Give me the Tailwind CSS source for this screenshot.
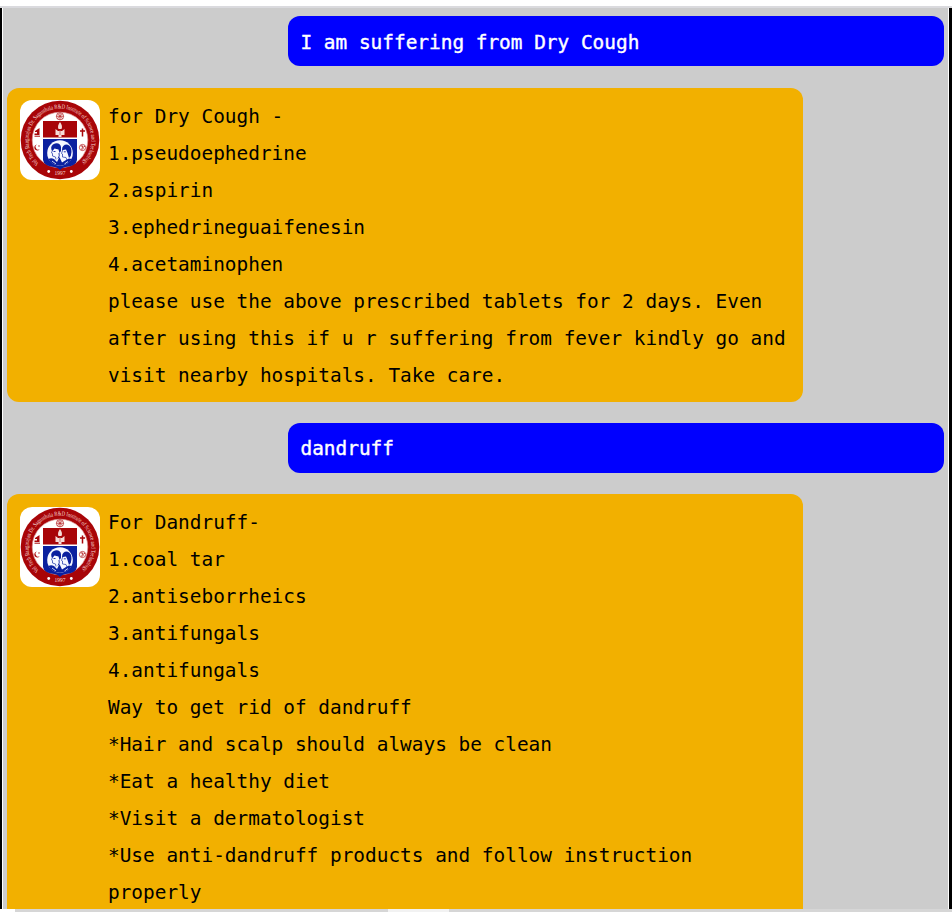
<!DOCTYPE html>
<html lang="en">
<head>
<meta charset="utf-8">
<title>Chat</title>
<script src="https://cdn.jsdelivr.net/npm/@tailwindcss/browser@4"></script>
</head>
<body class="h-[912px] w-[952px] overflow-hidden bg-white font-['DejaVu_Sans_Mono',monospace] text-[19.41px] leading-[37px] text-black">
<svg class="hidden">
  <defs>
    <path id="ring" d="M19 63.500A31.500 31.500 0 1 1 61 63.500"/>
    <symbol id="crest" viewBox="0 0 80 80">
      <rect width="80" height="80" fill="#fff"/>
      <circle cx="40" cy="40" r="39.3" fill="#a80508"/>
      <circle cx="40" cy="40" r="27.8" fill="#fff" stroke="#d99" stroke-width=".7"/>
      <text font-family="Liberation Serif, serif" font-size="6.2" fill="#f6dcd8"><textPath href="#ring" textLength="150" lengthAdjust="spacingAndGlyphs">Vel Tech Rangarajan Dr. Sagunthala R&amp;D Institute of Science and Technology</textPath></text>
      <text x="40" y="75.2" text-anchor="middle" font-family="Liberation Serif, serif" font-size="5.5" fill="#f4d5d0">1997</text>
      <circle cx="28.7" cy="71.5" r="1.4" fill="#fff"/><circle cx="51.3" cy="71.5" r="1.4" fill="#fff"/>
      <path d="M23 21H57V37.500H23Z" fill="#a80508"/>
      <path d="M23 39H57V60Q56 66 46 67Q42 67.500 40 70Q38 67.500 34 67Q24 66 23 60Z" fill="#0b209f"/>
      <g fill="none" stroke="#b92b2d" stroke-width=".8"><circle cx="40" cy="16.300" r="3.600"/><path d="M36.400 16.300H43.600M40 12.700V19.900M37.500 13.800L42.500 18.800M42.500 13.800L37.500 18.800"/></g>
      <path d="M40 22Q43 26 41.500 29H38.500Q37 26 40 22ZM35.500 29L38 31H42L44.500 29V35H41.500V37H38.500V35H35.500Z" fill="#f6dcd8"/>
      <path d="M40 30V35" stroke="#c45a5a" stroke-width=".8"/>
      <path d="M15 31L19.500 28V35H14.500V33.500H17V32H15Z" fill="#a80508"/>
      <path d="M14.500 36.200H20" stroke="#a80508"/>
      <path d="M62.500 28.500V36.500M60 31H65" stroke="#a80508" stroke-width="1.5"/>
      <path d="M17 44.500A3 3 0 1 0 19.700 49.300A2.700 2.700 0 0 1 17 44.500Z" fill="#a80508"/>
      <circle cx="19" cy="46" r=".7" fill="#a80508"/>
      <circle cx="62.500" cy="47.500" r="3.100" fill="none" stroke="#b92b2d" stroke-width=".8"/>
      <path d="M60.700 46Q63.500 45 62.300 47.300Q64.500 49.500 61 49M63 47.500L65 46" fill="none" stroke="#a80508" stroke-width=".8"/>
      <circle cx="40" cy="53" r="12.800" fill="#f7f8ff"/>
      <path d="M31.500 50Q30 45 35 43.500Q40 42.500 41 47V51L39.500 53L38.500 49.500L34.500 48.500L32.500 51Z" fill="#0b209f"/>
      <path d="M42 50Q42 44.500 47 44.500Q52 46 51.500 52Q51.500 56 49 58L47.500 53L46 49.500L43 50Z" fill="#0b209f"/>
      <path d="M32.500 50L31.500 53L32.500 53.500V56L35.500 57L36 59.500M42.700 50L41.500 53.500L42.500 54V57L46 57.500L47 60" fill="none" stroke="#3046ad" stroke-width=".8"/>
      <path d="M33.500 51.500H35.500M43.800 51.800H45.800M39 53Q40 56 38 58.500" fill="none" stroke="#0b209f" stroke-width=".9"/>
      <path d="M28.500 59Q31 57.500 34 59L37 62L39.500 57L42 62.500L46 60L49 58.500L51.500 59Q48 65.800 40 65.800Q32 65.800 28.500 59Z" fill="#0b209f"/>
      <path d="M32 61L36 64M44.500 64L48 61.500" stroke="#dce2ff" stroke-width=".9"/>
    </symbol>
  </defs>
</svg>
<div class="flex h-full flex-col">
  <header class="h-2 shrink-0 border-b-2 border-[#dadade] bg-white"></header>
  <main class="flex h-[901px] shrink-0 border-r-[3px] border-l-2 border-black">
    <div class="flex w-full flex-col overflow-hidden border-x border-white bg-[#ccc] px-1 pt-2">
      <div class="mb-[22px] h-[50px] w-[656px] shrink-0 self-end rounded-[12px] bg-[blue] px-[12.5px] pt-2 text-white [-webkit-text-stroke:0.4px_white]">I am suffering from Dry Cough</div>
      <div class="mb-[21px] flex h-[314px] w-[796px] shrink-0 gap-[8px] rounded-[12px] bg-[#f2b000] px-[13px] pt-[10px]">
        <svg class="mt-[2px] size-20 shrink-0 rounded-[12px]"><use href="#crest"/></svg>
        <div class="whitespace-nowrap">for Dry Cough -<br>1.pseudoephedrine<br>2.aspirin<br>3.ephedrineguaifenesin<br>4.acetaminophen<br>please use the above prescribed tablets for 2 days. Even<br>after using this if u r suffering from fever kindly go and<br>visit nearby hospitals. Take care.</div>
      </div>
      <div class="mb-[21px] h-[50px] w-[656px] shrink-0 self-end rounded-[12px] bg-[blue] px-[12.5px] pt-[7px] text-white [-webkit-text-stroke:0.4px_white]">dandruff</div>
      <div class="flex h-[440px] w-[796px] shrink-0 gap-[8px] rounded-[12px] bg-[#f2b000] px-[13px] pt-[10px]">
        <svg class="mt-[3px] size-20 shrink-0 rounded-[12px]"><use href="#crest"/></svg>
        <div class="whitespace-nowrap">For Dandruff-<br>1.coal tar<br>2.antiseborrheics<br>3.antifungals<br>4.antifungals<br>Way to get rid of dandruff<br>*Hair and scalp should always be clean<br>*Eat a healthy diet<br>*Visit a dermatologist<br>*Use anti-dandruff products and follow instruction<br>properly</div>
      </div>
    </div>
  </main>
  <footer class="flex h-[3px] shrink-0 bg-[#d6d6d6]"><div class="w-[15px] bg-white"></div><div class="ml-[373px] w-[61px] bg-[#f2f2f2]"></div></footer>
</div>
</body>
</html>
